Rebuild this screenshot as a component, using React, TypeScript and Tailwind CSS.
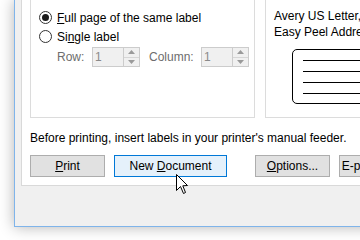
import React from "react";

const Radio = ({ checked }: { checked?: boolean }) => (
  <span className="w-[13px] h-[13px] rounded-full border border-[#333333] bg-white flex items-center justify-center shrink-0">
    {checked && <span className="w-[7px] h-[7px] rounded-full bg-[#1a1a1a]" />}
  </span>
);

const Spin = () => (
  <div className="flex w-[48px] h-[20px] border border-[#cccccc] bg-[#f0f0f0]">
    <span className="flex-1 pl-[2px] leading-[18px] text-[#8a8a8a]">1</span>
    <div className="w-[16px] flex flex-col border-l border-[#cccccc]">
      <div className="flex-1 flex items-center justify-center border-b border-[#d6d6d6]">
        <svg width="7" height="4" viewBox="0 0 7 4">
          <path d="M0 4 L3.5 0 L7 4 Z" fill="#9a9a9a" />
        </svg>
      </div>
      <div className="flex-1 flex items-center justify-center">
        <svg width="7" height="4" viewBox="0 0 7 4">
          <path d="M0 0 L3.5 4 L7 0 Z" fill="#9a9a9a" />
        </svg>
      </div>
    </div>
  </div>
);

const Btn = ({ w, active, children }: { w: string; active?: boolean; children: React.ReactNode }) => (
  <div
    className={
      active
        ? "h-[22px] flex items-center justify-center whitespace-nowrap border border-[#0078d7] bg-[#e5f1fb] shrink-0 " + w
        : "h-[22px] flex items-center justify-center whitespace-nowrap border border-[#adadad] bg-[#e1e1e1] shrink-0 " + w
    }
  >
    {children}
  </div>
);

export default function App() {
  return (
    <div className="relative w-[360px] h-[240px] overflow-hidden bg-white text-[12px] text-black font-['Segoe_UI','Liberation_Sans',sans-serif]">
      <div className="ml-[14px] w-[420px] h-[227px] bg-[#f0f0f0] border-l border-b border-[#7fb4ea] shadow-[0_0_14px_rgba(0,0,0,0.3)] pl-[6px]">
        <div className="h-[186px] bg-white border-l border-b border-[#d9d9d9] pl-[8px]">
          <div className="flex gap-[10px]">
            <div className="w-[225px] h-[118px] border-l border-r border-b border-[#dcdcdc] pl-[8px] pt-[8px]">
              <div className="h-[19px] flex items-center gap-[5px]">
                <Radio checked />
                <span>
                  <u>F</u>ull page of the same label
                </span>
              </div>
              <div className="h-[19px] flex items-center gap-[5px]">
                <Radio />
                <span>
                  Si<u>n</u>gle label
                </span>
              </div>
              <div className="mt-[1px] h-[20px] flex items-center pl-[18px] text-[#6d6d6d]">
                <span className="w-[35px]">Row:</span>
                <Spin />
                <span className="w-[52px] ml-[9px]">Column:</span>
                <Spin />
              </div>
            </div>
            <div className="flex-1 h-[118px] border-l border-b border-[#dcdcdc] pl-[8px] pt-[8px]">
              <div className="leading-[16px] whitespace-nowrap">Avery US Letter, 5160</div>
              <div className="leading-[16px] whitespace-nowrap">Easy Peel Address Labels</div>
              <div className="mt-[9px] ml-[18px] w-[120px] h-[55px] border-[1.5px] border-black rounded-[5px] pl-[10px] pt-[10px] flex flex-col gap-[10px]">
                <div className="h-px bg-black" />
                <div className="h-px bg-black" />
                <div className="h-px bg-black" />
                <div className="h-px bg-black" />
              </div>
            </div>
          </div>
          <div className="mt-[11px] leading-[18px] whitespace-nowrap">
            Before printing, insert labels in your printer's manual feeder.
          </div>
          <div className="mt-[8px] flex">
            <Btn w="w-[75px]">
              <span>
                <u>P</u>rint
              </span>
            </Btn>
            <div className="ml-[9px]">
              <Btn w="w-[113px]" active>
                <span>
                  New <u>D</u>ocument
                </span>
              </Btn>
            </div>
            <div className="ml-[28px]">
              <Btn w="w-[75px]">
                <span>
                  <u>O</u>ptions...
                </span>
              </Btn>
            </div>
            <div className="ml-[9px]">
              <Btn w="w-[128px]">
                <span>E-postage Properties...</span>
              </Btn>
            </div>
          </div>
        </div>
      </div>
      <svg className="absolute left-[176px] top-[174px]" width="13" height="21" viewBox="0 0 13 21">
        <path
          d="M0.5 0.5 L0.5 16.5 L4.5 12.5 L7.5 19.5 L9.5 18.5 L6.8 11.8 L11.5 11.5 Z"
          fill="white"
          stroke="black"
          strokeWidth="1"
          strokeLinejoin="round"
        />
      </svg>
    </div>
  );
}
